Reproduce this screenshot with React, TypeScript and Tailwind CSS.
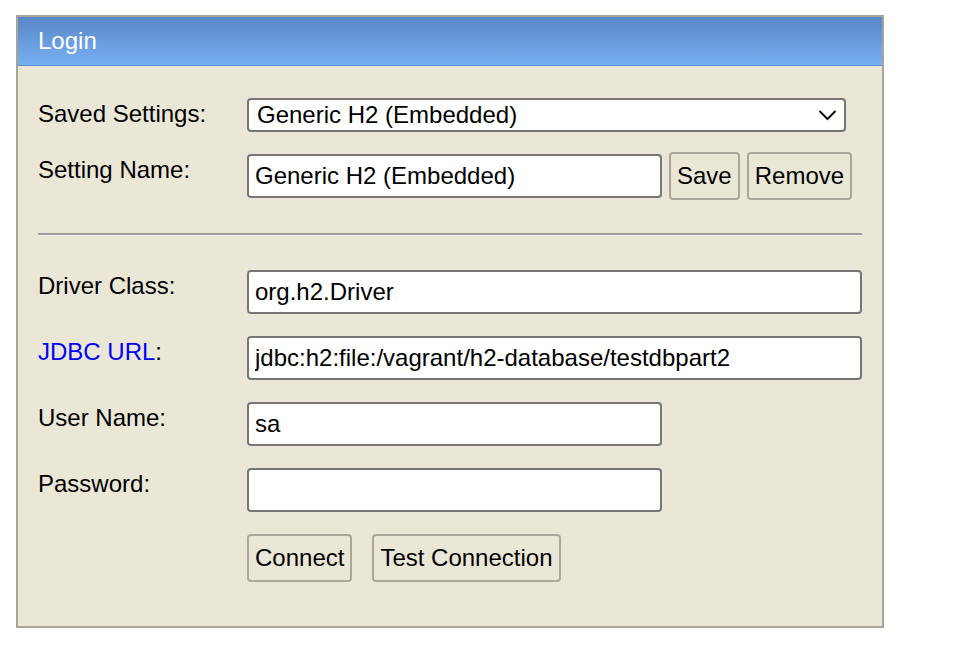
import React from 'react';

const inputCls =
  'h-[44px] rounded-[4px] border-2 border-[#767676] bg-white px-[6px] text-[24px] leading-[normal] text-black outline-none';
const buttonCls =
  'h-[48px] rounded-[4px] border-2 border-[#aaa699] bg-[#ebe7d7] px-[6px] text-[24px] leading-[normal] text-black';

function Label({ children }: { children: React.ReactNode }) {
  return <div className="w-[209px] shrink-0 pt-[2px]">{children}</div>;
}

export default function App() {
  return (
    <div className="min-h-screen bg-white pl-[16px] pt-[15px] font-['Liberation_Sans',Arial,sans-serif] text-[24px] leading-[normal] text-black">
      <div className="w-[868px] border-2 border-[#a9a596] bg-[#ebe7d7]">
        {/* Header */}
        <div className="flex h-[49px] items-center border-b border-[#5b8fd3] bg-gradient-to-b from-[#5a87c7] to-[#77b0f2] px-[20px] text-white">
          Login
        </div>

        <div className="px-[20px] pb-[44px] pt-[32px]">
          {/* Saved settings */}
          <div className="flex items-start">
            <Label>Saved Settings:</Label>
            <div className="flex h-[34px] w-[599px] items-center justify-between rounded-[4px] border-2 border-[#767676] bg-white pl-[8px] pr-[7px]">
              <span>Generic H2 (Embedded)</span>
              <svg width="19" height="12" viewBox="0 0 19 12" fill="none">
                <polyline points="1.5,2 9.5,10 17.5,2" stroke="#111" strokeWidth="2" />
              </svg>
            </div>
          </div>

          {/* Setting name */}
          <div className="mt-[20px] flex items-start">
            <div className="w-[209px] shrink-0 pt-[4px]">Setting Name:</div>
            <div className="flex items-center gap-[7px]">
              <input className={`${inputCls} w-[415px]`} defaultValue="Generic H2 (Embedded)" />
              <button className={buttonCls}>Save</button>
              <button className={buttonCls}>Remove</button>
            </div>
          </div>

          <div className="mt-[33px] h-[3px] border-t-2 border-b border-t-[#9c9c9c] border-b-[#f4f2ea]" />

          <div className="mt-[34px] flex items-start">
            <Label>Driver Class:</Label>
            <input className={`${inputCls} flex-1`} defaultValue="org.h2.Driver" />
          </div>

          <div className="mt-[22px] flex items-start">
            <Label>
              <span className="text-[#0000ff]">JDBC URL</span>:
            </Label>
            <input className={`${inputCls} flex-1`} defaultValue="jdbc:h2:file:/vagrant/h2-database/testdbpart2" />
          </div>

          <div className="mt-[22px] flex items-start">
            <Label>User Name:</Label>
            <input className={`${inputCls} w-[415px]`} defaultValue="sa" />
          </div>

          <div className="mt-[22px] flex items-start">
            <Label>Password:</Label>
            <input type="password" className={`${inputCls} w-[415px]`} defaultValue="" />
          </div>

          <div className="ml-[209px] mt-[22px] flex gap-[20px]">
            <button className={buttonCls}>Connect</button>
            <button className={buttonCls}>Test Connection</button>
          </div>
        </div>
      </div>
    </div>
  );
}
